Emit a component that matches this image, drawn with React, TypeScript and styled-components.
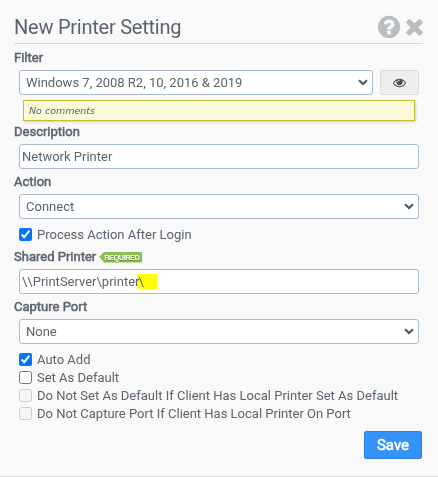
import React from "react";
import styled, { createGlobalStyle } from "styled-components";

const GlobalStyle = createGlobalStyle`
  * { box-sizing: border-box; }
  body {
    margin: 0;
    background: #f9f9f9;
    color: #5a646e;
    font: 13px/18px Roboto, "Liberation Sans", sans-serif;
  }
`;

const Panel = styled.main`
  display: flex;
  flex-direction: column;
  width: 438px;
  height: 477px;
  padding: 10px 15px 0 14px;
  background: #f9f9f9;
  border-bottom: 1px solid #dcdcdc;
`;

const Header = styled.header`
  display: flex;
  align-items: center;
  justify-content: space-between;
  height: 34px;
  margin-bottom: 1px;
  border-bottom: 1px solid #d3dad9;
`;

const Title = styled.h1`
  margin: 0;
  font-size: 20px;
  font-weight: 400;
  line-height: 32px;
  letter-spacing: -0.24px;
`;

const HeaderActions = styled.div`
  display: flex;
  align-items: center;
  margin-right: -4px;
  color: #b9bec3;
`;

const Icon = styled.svg<{ $size: number }>`
  display: block;
  width: ${(p) => p.$size}px;
  height: ${(p) => p.$size}px;
  fill: currentColor;
`;

const FieldLabel = styled.label`
  display: flex;
  align-items: center;
  gap: 3px;
  height: 25px;
  padding-top: 1px;
  -webkit-text-stroke: 0.5px currentColor;
`;

const FieldRow = styled.div`
  display: flex;
  gap: 7px;
  height: 25px;
  padding: 0 4px 0 5px;
`;

const SelectFrame = styled.div`
  display: flex;
  position: relative;
  flex: 1;
`;

const SelectInput = styled.select`
  appearance: none;
  flex: 1;
  min-width: 0;
  height: 25px;
  padding: 0 20px 0 6px;
  border: 1px solid #a9bbcf;
  border-radius: 3px;
  background: #fff;
  color: #5a646e;
  font: inherit;
`;

const Chevron = styled.svg`
  position: absolute;
  right: 5px;
  top: 9px;
  width: 10px;
  height: 7px;
  fill: none;
  stroke: #4a5560;
  stroke-width: 2;
  pointer-events: none;
`;

const InputBox = styled.div`
  display: flex;
  align-items: center;
  flex: 1;
  height: 25px;
  padding: 0 2px;
  border: 1px solid #a9bbcf;
  border-radius: 3px;
  background: #fff;
  white-space: pre;
`;

const Highlight = styled.mark`
  width: 20px;
  height: 15px;
  margin-left: -2px;
  padding-left: 1px;
  background: #ff0;
  color: inherit;
  line-height: 15px;
  mix-blend-mode: multiply;
`;

const ViewButton = styled.button`
  display: flex;
  align-items: center;
  justify-content: center;
  width: 39px;
  padding: 0;
  border: 1px solid #dcdcdc;
  border-radius: 2px;
  background: #eee;
  color: #4c4c4c;
`;

const Comment = styled.div`
  height: 21px;
  margin: 5px 8px -2px 9px;
  padding-left: 5px;
  border: 1px solid #c3c034;
  background: #fafad9;
  box-shadow: 1px 1px 2px #ccc;
  font: italic 9.5px/20px "DejaVu Sans", sans-serif;
`;

const RequiredTag = styled.span`
  display: flex;
  align-items: center;
  width: 43px;
  height: 11px;
  padding-left: 5px;
  background: #8bbf4d;
  border-radius: 1px;
  clip-path: polygon(5px 0, 100% 0, 100% 100%, 5px 100%, 0 50%);
  color: #fff;
  font: bold 7.5px/11px "Liberation Sans", sans-serif;
  letter-spacing: -0.55px;
  text-shadow: 0 1px 0 #638f34;
  -webkit-text-stroke: 0;
`;

const CheckList = styled.div`
  display: flex;
  flex-direction: column;
  padding: 7px 0 0 5px;
`;

const CheckRow = styled.label`
  display: flex;
  align-items: flex-start;
  gap: 5px;
  height: 18px;
  white-space: nowrap;
`;

const Checkbox = styled.input`
  width: 13px;
  height: 13px;
  margin: 2px 0 0;
`;

const Footer = styled.footer`
  display: flex;
  justify-content: flex-end;
  padding: 8px 1px 0 0;
`;

const SaveButton = styled.button`
  width: 58px;
  height: 28px;
  padding: 0;
  border: 1px solid #2f80e8;
  border-radius: 2px;
  background: #3492f8;
  color: #fff;
  font: 15px/26px Roboto, sans-serif;
  -webkit-text-stroke: 0.5px #fff;
`;

const ICONS = {
  help: "M1024 1376v-192q0-14-9-23t-23-9h-192q-14 0-23 9t-9 23v192q0 14 9 23t23 9h192q14 0 23-9t9-23zm256-672q0-88-55.500-163t-138.500-116-170.500-41q-243 0-371 213-15 24 8 42l132 100q7 6 19 6 16 0 25-12 53-68 86-92 34-24 86-24 48 0 85.500 26t37.500 59q0 38-20 61t-68 45q-63 28-115.500 86.500t-52.500 125.500v36q0 14 9 23t23 9h192q14 0 23-9t9-23q0-19 21.500-49.500t54.500-49.500q32-18 49-28.500t46-35 44.500-48 28-60.500 12.500-81zm384 192q0 209-103 385.500t-279.500 279.500-385.500 103-385.500-103-279.500-279.500-103-385.500 103-385.500 279.500-279.500 385.500-103 385.500 103 279.500 279.500 103 385.500z",
  close: "M1490 1322q0 40-28 68l-136 136q-28 28-68 28t-68-28l-294-294-294 294q-28 28-68 28t-68-28l-136-136q-28-28-28-68t28-68l294-294-294-294q-28-28-28-68t28-68l136-136q28-28 68-28t68 28l294 294 294-294q28-28 68-28t68 28l136 136q28 28 28 68t-28 68l-294 294 294 294q28 28 28 68z",
  eye: "M1664 960q-152-236-381-353 61 104 61 225 0 185-131.500 316.500t-316.500 131.500-316.500-131.500-131.500-316.500q0-121 61-225-229 117-381 353 133 205 333.500 326.500t434.500 121.500 434.500-121.500 333.500-326.500zm-720-384q0-20-14-34t-34-14q-125 0-214.500 89.500t-89.500 214.500q0 20 14 34t34 14 34-14 14-34q0-86 61-147t147-61q20 0 34-14t14-34zm848 384q0 34-20 69-140 230-376.500 368.500t-499.500 138.500-499.500-139-376.500-368q-20-35-20-69t20-69q140-229 376.500-368t499.500-139 499.500 139 376.500 368q20 35 20 69z",
};

const Select = ({ value }: { value: string }) => (
  <SelectFrame>
    <SelectInput><option>{value}</option></SelectInput>
    <Chevron viewBox="0 0 10 7"><path d="M1 1.200 5 5l4-3.800" /></Chevron>
  </SelectFrame>
);

const Check = ({ label, checked, disabled }: { label: string; checked?: boolean; disabled?: boolean }) => (
  <CheckRow>
    <Checkbox type="checkbox" defaultChecked={checked} disabled={disabled} />
    {label}
  </CheckRow>
);

export default function App() {
  return (
    <>
      <GlobalStyle />
      <Panel>
        <Header>
          <Title>New Printer Setting</Title>
          <HeaderActions>
            <Icon $size={26} viewBox="0 0 1792 1792"><path d={ICONS.help} /></Icon>
            <Icon $size={25} viewBox="0 0 1792 1792"><path d={ICONS.close} /></Icon>
          </HeaderActions>
        </Header>

        <FieldLabel>Filter</FieldLabel>
        <FieldRow>
          <Select value="Windows 7, 2008 R2, 10, 2016 &amp; 2019" />
          <ViewButton aria-label="View filter">
            <Icon $size={13} viewBox="0 0 1792 1792"><path d={ICONS.eye} /></Icon>
          </ViewButton>
        </FieldRow>
        <Comment>No comments</Comment>

        <FieldLabel>Description</FieldLabel>
        <FieldRow><InputBox>Network Printer</InputBox></FieldRow>

        <FieldLabel>Action</FieldLabel>
        <FieldRow><Select value="Connect" /></FieldRow>
        <CheckList><Check label="Process Action After Login" checked /></CheckList>

        <FieldLabel>Shared Printer<RequiredTag>REQUIRED</RequiredTag></FieldLabel>
        <FieldRow><InputBox>{"\\\\PrintServer\\printer"}<Highlight>{"\\"}</Highlight></InputBox></FieldRow>

        <FieldLabel>Capture Port</FieldLabel>
        <FieldRow><Select value="None" /></FieldRow>
        <CheckList>
          <Check label="Auto Add" checked />
          <Check label="Set As Default" />
          <Check label="Do Not Set As Default If Client Has Local Printer Set As Default" disabled />
          <Check label="Do Not Capture Port If Client Has Local Printer On Port" disabled />
        </CheckList>

        <Footer><SaveButton>Save</SaveButton></Footer>
      </Panel>
    </>
  );
}
